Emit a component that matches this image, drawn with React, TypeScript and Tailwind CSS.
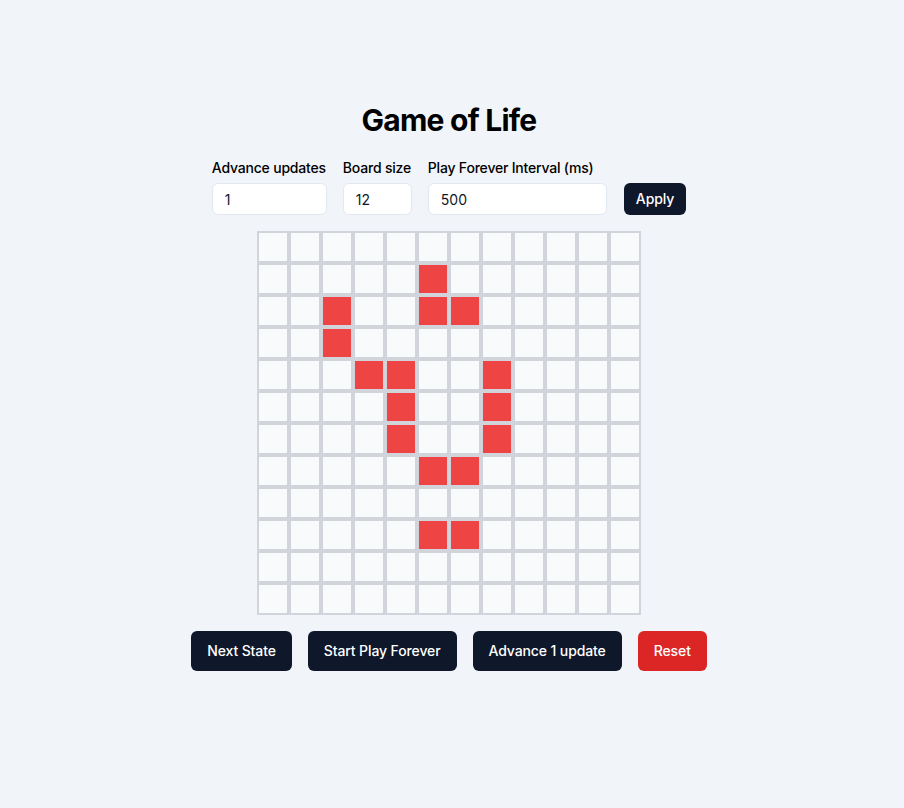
import React from "react";

const SIZE = 12;
const LIVE = new Set([
  "1-5",
  "2-2", "2-5", "2-6",
  "3-2",
  "4-3", "4-4", "4-7",
  "5-4", "5-7",
  "6-4", "6-7",
  "7-5", "7-6",
  "9-5", "9-6",
]);

function Field({ label, value, width }: { label: string; value: string; width: string }) {
  return (
    <div className="flex flex-col gap-[5px]">
      <label className="text-sm font-medium text-black leading-5 tracking-[-0.014em] whitespace-nowrap">{label}</label>
      <input
        defaultValue={value}
        className={`${width} h-8 rounded-md border border-[#e2e8f0] bg-white px-3 text-sm text-[#0f172a] outline-none`}
      />
    </div>
  );
}

export default function App() {
  const cells = [];
  for (let r = 0; r < SIZE; r++) {
    for (let c = 0; c < SIZE; c++) {
      const live = LIVE.has(`${r}-${c}`);
      cells.push(
        <div
          key={`${r}-${c}`}
          className={`w-8 h-8 border-2 border-[#d1d5db] ${live ? "bg-[#ef4444]" : "bg-[#f9fafb]"}`}
        />
      );
    }
  }
  const dark = "h-10 rounded-md bg-[#0f172a] px-4 text-sm font-medium text-white tracking-[-0.008em]";
  return (
    <div
      className="min-h-[808px] w-full bg-[#f1f5f9] pr-[6px] pt-[102px]"
      style={{ fontFamily: "Inter, 'Liberation Sans', sans-serif" }}
    >
      <div className="flex flex-col items-center">
        <h1 className="text-3xl font-bold text-black leading-9 mb-5 tracking-[-0.025em]">Game of Life</h1>
        <div className="flex items-end gap-4">
          <Field label="Advance updates" value="1" width="w-[115px]" />
          <Field label="Board size" value="12" width="w-[69px]" />
          <Field label="Play Forever Interval (ms)" value="500" width="w-[179px]" />
          <button className="ml-px h-8 rounded-md bg-[#0f172a] px-3 text-sm font-medium text-white tracking-[-0.008em]">
            Apply
          </button>
        </div>
        <div className="mt-4 grid grid-cols-12">{cells}</div>
        <div className="mt-4 flex gap-4">
          <button className={dark}>Next State</button>
          <button className={dark}>Start Play Forever</button>
          <button className={dark}>Advance 1 update</button>
          <button className="h-10 rounded-md bg-[#dc2626] px-4 text-sm font-medium text-white tracking-[-0.008em]">Reset</button>
        </div>
      </div>
    </div>
  );
}
